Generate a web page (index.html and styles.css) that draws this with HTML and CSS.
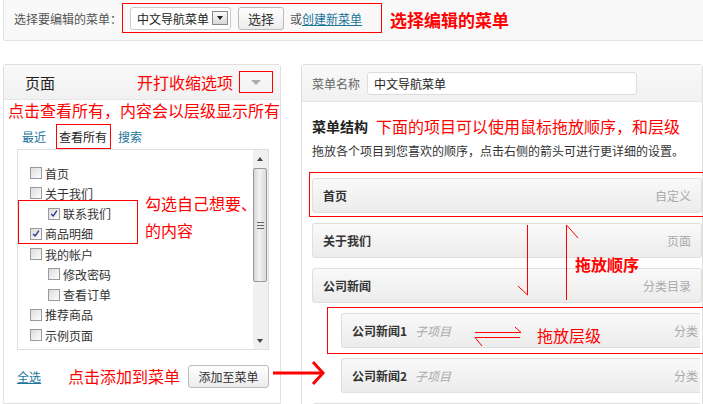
FILE: index.html
```html
<!DOCTYPE html>
<html lang="zh-CN">
<head>
  <meta charset="UTF-8" />
  <title>菜单 - 编辑</title>
  <link rel="stylesheet" href="styles.css">
</head>
<body>
  <div class="page">
    <div class="topbar">
      <span class="topbar-label">选择要编辑的菜单：</span>
      <div class="select-group">
        <div class="select"><span class="select-text">中文导航菜单</span><span class="select-btn"></span></div>
        <button class="btn">选择</button>
        <span class="or">或<a href="#">创建新菜单</a></span>
      </div>
      <span class="note note-top">选择编辑的菜单</span>
    </div>

    <div class="columns">
      <!-- 左侧：页面 -->
      <div class="panel side">
        <div class="panel-head">
          <span class="panel-title">页面</span>
          <span class="note">开打收缩选项</span>
          <span class="toggle"><i></i></span>
        </div>
        <div class="note side-note">点击查看所有，内容会以层级显示所有</div>
        <div class="tabs">
          <a href="#" class="tab">最近</a>
          <span class="tab active">查看所有</span>
          <a href="#" class="tab">搜索</a>
        </div>
        <div class="tab-box">
          <ul class="checklist">
            <li><span class="cb"></span>首页</li>
            <li><span class="cb"></span>关于我们</li>
            <li class="child"><span class="cb"><svg viewBox="0 0 12 12"><path d="M2.5 6.5 L5 9 L9.5 2.5" /></svg></span>联系我们</li>
            <li><span class="cb"><svg viewBox="0 0 12 12"><path d="M2.5 6.5 L5 9 L9.5 2.5" /></svg></span>商品明细</li>
            <li><span class="cb"></span>我的帐户</li>
            <li class="child"><span class="cb"></span>修改密码</li>
            <li class="child"><span class="cb"></span>查看订单</li>
            <li><span class="cb"></span>推荐商品</li>
            <li><span class="cb"></span>示例页面</li>
            <li><span class="cb"></span></li>
          </ul>
          <div class="scrollbar">
            <span class="sb-up"></span>
            <span class="sb-thumb"><i></i></span>
            <span class="sb-down"></span>
          </div>
        </div>
        <div class="side-foot">
          <a href="#" class="select-all">全选</a>
          <span class="note">点击添加到菜单</span>
          <button class="btn">添加至菜单</button>
        </div>
      </div>

      <!-- 右侧：菜单结构 -->
      <div class="panel main">
        <div class="panel-head menu-head">
          <span class="menu-label">菜单名称</span>
          <span class="input">中文导航菜单</span>
        </div>
        <div class="menu-body">
          <div class="menu-title"><b>菜单结构</b><span class="note">下面的项目可以使用鼠标拖放顺序，和层级</span></div>
          <p class="menu-desc">拖放各个项目到您喜欢的顺序，点击右侧的箭头可进行更详细的设置。</p>
          <ul class="menu-items">
            <li class="item"><b>首页</b><span class="type">自定义</span></li>
            <li class="item"><b>关于我们</b><span class="type">页面</span></li>
            <li class="item"><b>公司新闻</b><span class="type">分类目录</span></li>
            <li class="item sub"><b>公司新闻1</b><em>子项目</em><span class="type">分类</span></li>
            <li class="item sub"><b>公司新闻2</b><em>子项目</em><span class="type">分类</span></li>
            <li class="item"></li>
          </ul>
        </div>
      </div>
    </div>

    <!-- 标注 -->
    <div class="mark mark-check"></div>
    <div class="note mark-check-text">勾选自己想要、<br>的内容</div>
    <div class="mark mark-item"></div>
    <div class="mark mark-sub"></div>
    <div class="note mark-order">拖放顺序</div>
    <div class="note mark-level">拖放层级</div>
    <svg class="arrows" width="703" height="404">
      <!-- 添加到菜单 -->
      <line x1="273" y1="373" x2="321" y2="373" stroke="#f00" stroke-width="3" />
      <polyline points="313,362 323,373 313,384" fill="none" stroke="#f00" stroke-width="3" />
      <!-- 拖放顺序 -->
      <line x1="527.5" y1="225" x2="527.5" y2="295" stroke="#f00" stroke-width="1" />
      <line x1="518" y1="286" x2="527.5" y2="295" stroke="#f00" stroke-width="1" />
      <line x1="566.5" y1="225" x2="566.5" y2="300" stroke="#f00" stroke-width="1" />
      <line x1="566.5" y1="225" x2="578" y2="238" stroke="#f00" stroke-width="1" />
      <!-- 拖放层级 -->
      <line x1="475" y1="332.5" x2="521" y2="332.5" stroke="#f00" stroke-width="1" />
      <line x1="515" y1="327" x2="521" y2="332.5" stroke="#f00" stroke-width="1" />
      <line x1="475" y1="337.5" x2="520" y2="337.5" stroke="#f00" stroke-width="1" />
      <line x1="475" y1="337.5" x2="482" y2="346" stroke="#f00" stroke-width="1" />
    </svg>
  </div>
</body>
</html>
```

FILE: styles.css
```css
* {
  margin: 0;
  padding: 0;
  box-sizing: border-box;
}

body {
  font-family: "Noto Sans CJK SC", "Liberation Sans", sans-serif;
  font-size: 12px;
  color: #333;
  background: #fff;
  overflow: hidden;
}

a {
  color: #21759b;
}

ul {
  list-style: none;
}

.page {
  position: relative;
  width: 703px;
  height: 404px;
  overflow: hidden;
}

.note {
  color: #f00;
  font-size: 16px;
  line-height: 20px;
  white-space: nowrap;
}

.btn {
  font-family: inherit;
  font-size: 12px;
  color: #333;
  height: 23px;
  padding: 0;
  white-space: nowrap;
  border: 1px solid #bbb;
  border-radius: 3px;
  background: linear-gradient(#fefefe, #ececec);
}

/* 顶部选择栏 */
.topbar {
  display: flex;
  align-items: flex-start;
  width: 760px;
  height: 41px;
  margin-left: 3px;
  padding-left: 10px;
  background: #f9f9f9;
  border: 1px solid #e3e3e3;
  border-top: none;
  border-radius: 0 0 0 3px;
}

.topbar-label {
  color: #555;
  line-height: 38px;
}

.select-group {
  display: flex;
  align-items: center;
  width: 260px;
  height: 30px;
  margin-top: 3px;
  padding-left: 7px;
  border: 1px solid #f00;
}

.select {
  display: flex;
  align-items: center;
  justify-content: space-between;
  width: 101px;
  height: 23px;
  padding: 0 2px 0 6px;
  border: 1px solid #ccc;
  border-radius: 3px;
  background: #fff;
  color: #222;
}

.select-btn {
  position: relative;
  width: 16px;
  height: 14px;
  border: 1px solid #888;
  background: linear-gradient(#fafafa, #d8d8d8);
}

.select-btn::after {
  content: "";
  position: absolute;
  left: 4px;
  top: 4px;
  border-left: 3.5px solid transparent;
  border-right: 3.5px solid transparent;
  border-top: 4px solid #222;
}

.select-group .btn {
  margin-left: 7px;
  width: 46px;
  font-size: 13px;
}

.or {
  margin-left: 6px;
  color: #555;
}

.note-top {
  margin-left: 8px;
  font-size: 17px;
  font-weight: 700;
  line-height: 40px;
}

/* 两栏 */
.columns {
  display: flex;
  gap: 20px;
  margin-top: 23px;
  margin-left: 3px;
}

.panel {
  border: 1px solid #dfdfdf;
  border-radius: 3px 3px 0 0;
  background: #fff;
}

.panel-head {
  display: flex;
  align-items: center;
  height: 35px;
  background: linear-gradient(#f9f9f9, #f1f1f1);
  border-bottom: 1px solid #e6e6e6;
}

.side {
  width: 280px;
  height: 340px;
}

.side .panel-head {
  padding: 0 7px 0 21px;
}

.panel-title {
  font-size: 15px;
  color: #222;
  margin-right: auto;
}

.toggle {
  display: flex;
  align-items: center;
  justify-content: center;
  width: 34px;
  height: 22px;
  margin-left: 6px;
  border: 1px solid #f00;
}

.toggle i {
  border-left: 5px solid transparent;
  border-right: 5px solid transparent;
  border-top: 5px solid #aaa;
}

.side-note {
  padding-left: 4px;
}

.tabs {
  display: flex;
  align-items: stretch;
  height: 25px;
  margin-top: 4px;
  padding-left: 13px;
}

.tab {
  line-height: 25px;
  text-decoration: none;
}

.tabs .tab:first-child {
  padding: 0 5px;
}

.tab.active {
  position: relative;
  z-index: 1;
  margin-left: 5px;
  padding: 0 3px 0 2px;
  border: 1px solid #f00;
  background: #fff;
  color: #222;
  line-height: 23px;
}

.tabs .tab:last-child {
  margin-left: 7px;
}

.tab-box {
  display: flex;
  width: 252px;
  height: 201px;
  margin-left: 13px;
  border: 1px solid #dfdfdf;
}

.checklist {
  flex: 1;
  overflow: hidden;
  padding: 13px 0 0 12px;
}

.checklist li {
  display: flex;
  align-items: center;
  height: 20.25px;
  color: #333;
}

.checklist li.child {
  padding-left: 18px;
}

.cb {
  display: flex;
  align-items: center;
  justify-content: center;
  width: 12px;
  height: 12px;
  margin-right: 3px;
  border: 1px solid #9a9a9a;
  background: linear-gradient(135deg, #dcdcdc, #fdfdfd);
}

.cb svg {
  width: 11px;
  height: 11px;
  fill: none;
  stroke: #2c3a92;
  stroke-width: 1.7;
}

.scrollbar {
  position: relative;
  width: 15px;
  background: #f0f0f0;
}

.sb-up,
.sb-down {
  position: absolute;
  left: 4px;
  border-left: 3.5px solid transparent;
  border-right: 3.5px solid transparent;
}

.sb-up {
  top: 7px;
  border-bottom: 4px solid #444;
}

.sb-down {
  bottom: 6px;
  border-top: 4px solid #444;
}

.sb-thumb {
  position: absolute;
  left: 0;
  top: 18px;
  width: 14px;
  height: 114px;
  border: 1px solid #999;
  border-radius: 2px;
  background: linear-gradient(90deg, #d6d6d6, #f2f2f2 45%, #dadada);
}

.sb-thumb i {
  position: absolute;
  left: 3px;
  top: 53px;
  width: 7px;
  height: 7px;
  border-top: 1px solid #666;
  border-bottom: 1px solid #666;
}

.sb-thumb i::after {
  content: "";
  position: absolute;
  left: 0;
  top: 2px;
  width: 7px;
  border-top: 1px solid #666;
}

.side-foot {
  display: flex;
  align-items: center;
  height: 52px;
  padding-left: 13px;
}

.select-all {
  margin-right: 27px;
}

.side-foot .btn {
  margin-left: 8px;
  width: 81px;
}

/* 右侧菜单 */
.main {
  width: 430px;
  height: 360px;
}

.menu-head {
  height: 37px;
  padding-left: 10px;
}

.menu-label {
  color: #666;
}

.input {
  width: 270px;
  height: 23px;
  margin-left: 7px;
  padding-left: 6px;
  line-height: 21px;
  color: #222;
  border: 1px solid #ddd;
  border-radius: 3px;
  background: #fff;
}

.menu-body {
  padding: 14px 0 0 10px;
}

.menu-title {
  display: flex;
  align-items: center;
  line-height: 20px;
}

.menu-title b {
  font-size: 14px;
  color: #222;
  margin-right: 8px;
}

.menu-desc {
  margin-top: 7px;
  line-height: 16px;
  color: #333;
}

.menu-items {
  margin-top: 19px;
}

.item {
  display: flex;
  align-items: center;
  width: 390px;
  height: 35px;
  margin-bottom: 10px;
  padding: 0 10px;
  border: 1px solid #dfdfdf;
  border-radius: 3px;
  background: linear-gradient(#f9f9f9, #ececec);
}

.item b {
  color: #333;
}

.item em {
  margin-left: 8px;
  color: #aaa;
}

.item .type {
  margin-left: auto;
  color: #aaa;
}

.item.sub {
  width: 359px;
  padding-right: 2px;
  margin-left: 29px;
  border-right: none;
  border-radius: 3px 0 0 3px;
}

/* 标注 */
.mark {
  position: absolute;
  border: 1px solid #f00;
}

.mark-check {
  left: 18px;
  top: 200px;
  width: 120px;
  height: 44px;
}

.mark-item {
  left: 309px;
  top: 172px;
  width: 420px;
  height: 45px;
}

.mark-sub {
  left: 327px;
  top: 307px;
  width: 420px;
  height: 47px;
}

.mark-check-text {
  position: absolute;
  left: 145px;
  top: 190px;
  line-height: 27px;
}

.mark-order {
  position: absolute;
  left: 575px;
  top: 254px;
  font-weight: 700;
}

.mark-level {
  position: absolute;
  left: 537px;
  top: 325px;
}

.arrows {
  position: absolute;
  left: 0;
  top: 0;
}
```
